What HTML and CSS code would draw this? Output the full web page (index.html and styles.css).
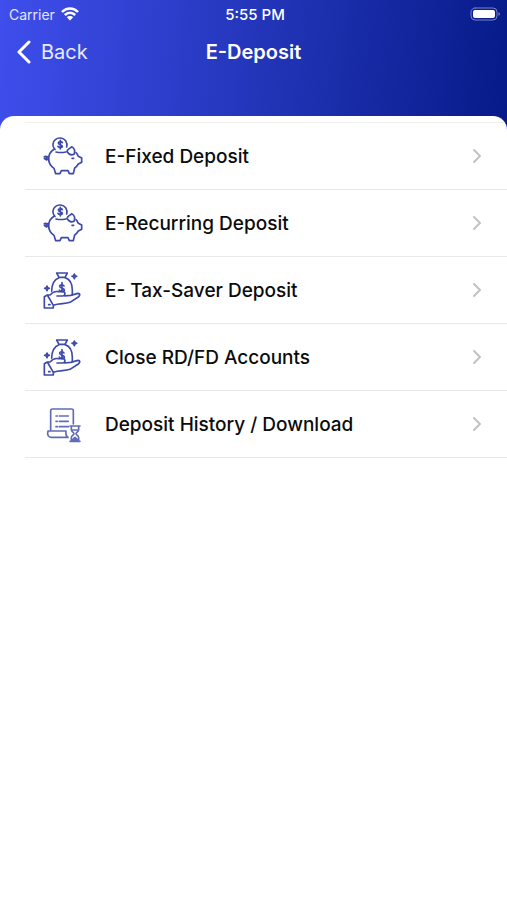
FILE: index.html
```html
<!DOCTYPE html>
<html lang="en">
<head>
<meta charset="utf-8">
<meta name="viewport" content="width=device-width, initial-scale=1">
<title>E-Deposit</title>
<link rel="stylesheet" href="styles.css">
</head>
<body>
<svg class="defs" aria-hidden="true">
  <symbol id="piggy" viewBox="0 0 156 156">
    <path d="M57 58C48 50 49 36 58 29c9-8 24-6 31 3 4 6 5 12 3 19"/>
    <path d="M79 38c-2-4-12-4-12 1 0 6 12 4 12 10 0 5-11 5-13 0M73 31v26"/>
    <path d="M54 58C44 64 38 74 38 87c0 12 6 21 16 28l5 16h13l4-9h20l4 9h12l4-17c5-3 8-7 11-12l10-5V84l-10-5c-2-4-4-8-7-11"/>
    <path d="M60 66c9 2 20 2 29 0M93 64c2-8 9-8 14-14 8 5 11 14 7 23-8 4-16 0-21-9z"/>
    <path d="M38 90c-3-2-6-4-8-7M25 80c4-3 8 0 7 5-2 4-6 3-7 0M34 80l-3 10M108 85h5"/>
  </symbol>
  <symbol id="moneybag" viewBox="0 0 156 156">
    <path d="M62 27h32l-7 13H69zM69 41C53 47 47 59 47 82M87 41c16 5 22 18 22 38v13"/>
    <path d="M84 66c-2-5-13-5-13 1 0 7 14 5 14 11 0 6-12 6-15 0M78 56v27"/>
    <path d="M34 93l-9 5v34h27v-8zM34 93h8c8-9 16-12 25-10h13c9 0 9 13 0 13H63M86 96l18-2 22-6c7 0 7 6 1 11l-25 16c-15 6-31 2-50 9M38 122h4"/>
    <path d="M115 30l2 5 5 2-5 2-2 5-2-5-5-2 5-2zM33 66l2 5 5 2-5 2-2 5-2-5-5-2 5-2z"/>
  </symbol>
  <symbol id="history" viewBox="0 0 156 156">
    <path d="M44 98V38c0-3 2-5 5-5h58c3 0 5 2 5 5v40M36 99h54M36 99c-3 12 1 19 10 19h50M90 99c-1 10 1 17 6 19"/>
    <path d="M60 54h4M70 54h27M60 70h4M70 70h27M60 86h4M70 86h27"/>
    <path d="M102 84h30M102 130h30M106 85v10c0 6 8 8 8 12s-8 6-8 12v10M128 85v10c0 6-8 8-8 12s8 6 8 12v10M110 96h14M110 125l7-7 7 7z"/>
  </symbol>
  <symbol id="chevron" viewBox="0 0 10 16">
    <path d="M2 2l6 6-6 6"/>
  </symbol>
</svg>

<header class="header">
  <div class="status">
    <div class="carrier">
      <span>Carrier</span>
      <svg class="wifi" viewBox="0 0 18 14" aria-hidden="true">
        <path d="M1 5C5.500 0.300 12.500 0.300 17 5M3.800 8C7 5 11 5 14.200 8"/>
        <path class="solid" d="M5.800 10.200C7.500 8.500 10.500 8.500 12.200 10.200L9 13.500z"/>
      </svg>
    </div>
    <time class="time">5:55 PM</time>
    <svg class="battery" viewBox="0 0 31 14" aria-hidden="true">
      <rect class="shell" x="1" y="1" width="26" height="12" rx="4"/>
      <rect class="charge" x="3" y="3" width="22" height="8" rx="2"/>
      <path class="cap" d="M28.500 5c2 1 2 3 0 4z"/>
    </svg>
  </div>
  <nav class="navbar">
    <a class="back" href="#">
      <svg class="back-arrow" viewBox="0 0 16 24" aria-hidden="true"><path d="M13 2L3 12l10 10"/></svg>
      <span>Back</span>
    </a>
    <h1 class="title">E-Deposit</h1>
  </nav>
</header>

<main class="sheet">
  <ul class="menu">
    <li><a class="row" href="#"><svg class="icon"><use href="#piggy"/></svg><span class="label">E-Fixed Deposit</span><svg class="chevron"><use href="#chevron"/></svg></a></li>
    <li><a class="row" href="#"><svg class="icon"><use href="#piggy"/></svg><span class="label">E-Recurring Deposit</span><svg class="chevron"><use href="#chevron"/></svg></a></li>
    <li><a class="row" href="#"><svg class="icon"><use href="#moneybag"/></svg><span class="label">E- Tax-Saver Deposit</span><svg class="chevron"><use href="#chevron"/></svg></a></li>
    <li><a class="row" href="#"><svg class="icon"><use href="#moneybag"/></svg><span class="label">Close RD/FD Accounts</span><svg class="chevron"><use href="#chevron"/></svg></a></li>
    <li><a class="row" href="#"><svg class="icon light"><use href="#history"/></svg><span class="label">Deposit History / Download</span><svg class="chevron"><use href="#chevron"/></svg></a></li>
  </ul>
</main>
</body>
</html>
```

FILE: styles.css
```css
* {
  box-sizing: border-box;
}

body {
  margin: 0;
  min-height: 100vh;
  display: flex;
  flex-direction: column;
  background: #fff;
  color: #0c0c0c;
  font-family: Inter, "Liberation Sans", sans-serif;
}

a {
  color: inherit;
  text-decoration: none;
}

svg {
  fill: none;
  stroke-linecap: round;
  stroke-linejoin: round;
  flex: none;
}

.defs {
  position: absolute;
  width: 0;
  height: 0;
}

.header {
  padding-bottom: 60px;
  background: linear-gradient(95deg, #3f4eec 0%, #2336ba 50%, #071a88 100%);
  color: #fff;
}

.status,
.navbar {
  display: grid;
  grid-template-columns: 1fr auto 1fr;
  align-items: center;
}

.status {
  height: 28px;
  padding: 0 6px 0 9px;
  font-size: 14px;
}

.carrier {
  display: flex;
  align-items: center;
  gap: 6px;
  color: #e3e6ff;
}

.wifi {
  width: 18px;
  height: 14px;
  stroke: #fff;
  stroke-width: 2.5;
  stroke-linecap: butt;
}

.wifi .solid {
  fill: #fff;
  stroke: none;
}

.time {
  font-size: 15px;
  font-weight: 500;
}

.battery {
  width: 31px;
  height: 14px;
  justify-self: end;
}

.shell {
  stroke: #7682c8;
  stroke-width: 1;
}

.charge {
  fill: #fff;
}

.cap {
  fill: #7682c8;
}

.navbar {
  height: 48px;
  padding: 0 16px;
}

.back {
  display: flex;
  align-items: center;
  gap: 9px;
  color: #e9ebff;
  font-size: 20px;
}

.back-arrow {
  width: 16px;
  height: 24px;
  stroke: #fff;
  stroke-width: 3;
}

.title {
  margin: 0;
  font-size: 20px;
  font-weight: 600;
}

.sheet {
  flex: 1;
  margin-top: -20px;
  padding-top: 6px;
  overflow: hidden;
  border-radius: 14px 14px 0 0;
  background: #fff;
}

.menu {
  margin: 0 0 0 25px;
  padding: 0;
  border-top: 1px solid #f0f0ee;
  list-style: none;
}

.row {
  display: flex;
  align-items: center;
  height: 67px;
  padding: 0 25px 0 11px;
  border-bottom: 1px solid #e8e8e8;
}

.icon {
  width: 52px;
  height: 52px;
  margin-right: 17px;
  stroke: #3d49ab;
  stroke-width: 5;
}

.icon.light {
  stroke: #626bb8;
}

.label {
  flex: 1;
  font-size: 19px;
  font-weight: 500;
}

.chevron {
  width: 10px;
  height: 16px;
  stroke: #c2c2c4;
  stroke-width: 2;
}
```
